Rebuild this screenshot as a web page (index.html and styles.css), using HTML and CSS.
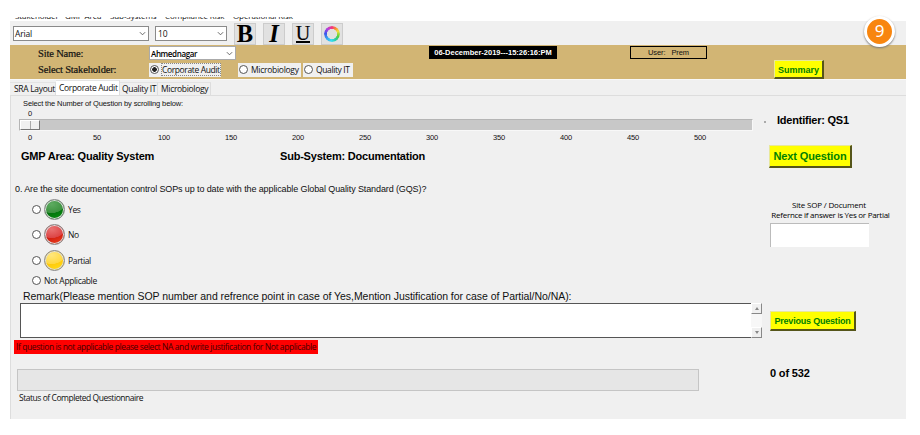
FILE: index.html
```html
<!DOCTYPE html>
<html lang="en">
<head>
<meta charset="utf-8">
<title>Site Risk Assessment</title>
<link rel="stylesheet" href="styles.css">
</head>
<body>
<div class="window">
  <nav class="menu"><span class="m1">Stakeholder</span><span class="m2">GMP Area</span><span class="m3">Sub-Systems</span><span class="m4">Compliance Risk</span><span class="m5">Operational Risk</span></nav>
  <div class="toolbar">
    <div class="combo font-combo"><span>Arial</span><svg class="chev" viewBox="0 0 8 5"><path d="M1 1l3 3 3-3"/></svg></div>
    <div class="combo size-combo"><span>10</span><svg class="chev" viewBox="0 0 8 5"><path d="M1 1l3 3 3-3"/></svg></div>
    <div class="tool bold">B</div>
    <div class="tool italic">I</div>
    <div class="tool underline"><span>U</span></div>
    <div class="tool"><i class="wheel"></i></div>
    <div class="badge">9</div>
  </div>
  <header class="header">
    <div class="hrow">
      <span class="hlabel site">Site Name:</span>
      <div class="combo site-combo"><span class="ahm">Ahmednagar</span><svg class="chev" viewBox="0 0 8 5"><path d="M1 1l3 3 3-3"/></svg></div>
      <div class="clock"><span>06-December-2019---15:26:16:PM</span></div>
      <div class="user"><span>User:&nbsp;&nbsp; Prem</span></div>
    </div>
    <div class="hrow second">
      <span class="hlabel stake">Select Stakeholder:</span>
      <label class="choice c1"><i class="radio on"></i><span class="focus">Corporate Audit</span></label>
      <label class="choice c2"><i class="radio"></i><span>Microbiology</span></label>
      <label class="choice c3"><i class="radio"></i><span>Quality IT</span></label>
      <button class="btn summary"><span>Summary</span></button>
    </div>
  </header>
  <div class="tabs">
    <span class="tab t1">SRA Layout</span><span class="tab t2 active">Corporate Audit</span><span class="tab t3">Quality IT</span><span class="tab t4">Microbiology</span>
  </div>
  <main class="panel">
    <section class="left">
      <div class="caption">Select the Number of Question by scrolling below:</div>
      <div class="value">0</div>
      <div class="slider"><i class="thumb"></i></div>
      <div class="ticks"><span>0</span><span>50</span><span>100</span><span>150</span><span>200</span><span>250</span><span>300</span><span>350</span><span>400</span><span>450</span><span>500</span></div>
      <div class="areas"><span class="gmp">GMP Area: Quality System</span><span class="sub">Sub-System: Documentation</span></div>
      <p class="question">0. Are the site documentation control SOPs up to date with the applicable Global Quality Standard (GQS)?</p>
      <label class="answer"><i class="radio"></i><i class="lamp green"></i><span>Yes</span></label>
      <label class="answer"><i class="radio"></i><i class="lamp red"></i><span>No</span></label>
      <label class="answer"><i class="radio"></i><i class="lamp yellow"></i><span>Partial</span></label>
      <label class="answer na"><i class="radio"></i><span>Not Applicable</span></label>
      <div class="remark">Remark(Please mention SOP number and refrence point in case of Yes,Mention Justification for case of Partial/No/NA):</div>
      <div class="memo"><div class="memo-text"></div><div class="scroll"><i class="arrow up"></i><i class="arrow down"></i></div></div>
      <div class="warning"><span>If question is not applicable please select NA and write justification for Not applicable</span></div>
      <div class="progress"></div>
      <div class="status">Status of Completed Questionnaire</div>
    </section>
    <aside class="right">
      <div class="ident"><i class="dot"></i><span>Identifier: QS1</span></div>
      <button class="btn next"><span>Next Question</span></button>
      <div class="sop"><span class="s1">Site SOP / Document</span><span class="s2">Refernce if answer is Yes or Partial</span></div>
      <div class="input"></div>
      <button class="btn prev"><span>Previous Question</span></button>
      <div class="count">0 of 532</div>
    </aside>
  </main>
</div>
</body>
</html>
```
FILE: styles.css
```css
* { box-sizing: border-box; }
body { margin: 0; width: 920px; height: 435px; overflow: hidden; background: #fff; font-family: "Open Sans", sans-serif; font-size: 8.5px; letter-spacing: -.38px; color: #111; white-space: nowrap; }
i { font-style: normal; display: block; flex: none; }
.window { margin: 17px 0 0 10px; width: 896px; }
.menu { height: 4px; display: flex; align-items: flex-end; overflow: hidden; padding-left: 5px; }
.menu span { flex: none; line-height: 12px; margin-bottom: -1px; font-size: 8px; letter-spacing: -.1px; }
.m1 { width: 50px; } .m2 { width: 45px; } .m3 { width: 55px; } .m4 { width: 68px; }
.toolbar { height: 24px; background: #f0f0f0; display: flex; padding: 2px 0 0 3px; position: relative; }
.combo { border: 1px solid #8a8a8a; background: #fff; display: flex; align-items: center; justify-content: space-between; padding: 0 2px 0 1px; }
.chev { width: 7px; height: 5px; fill: none; stroke: #555; stroke-width: 1; }
.font-combo { width: 136px; height: 15px; margin-top: 3px; letter-spacing: -.2px; }
.size-combo { width: 72px; height: 15px; margin: 3px 7px 0 6px; padding-left: 2px; letter-spacing: 0; }
.tool { width: 22px; height: 22px; margin-right: 7px; background: #e1e1e1; border: 1px solid #ccc; font: bold 24.5px/20px "Liberation Serif", serif; letter-spacing: 0; color: #000; text-align: center; display: flex; justify-content: center; align-items: center; }
.italic { font-style: italic; }
.underline { font-size: 20px; font-weight: normal; }
.underline span { line-height: 14px; height: 17px; border-bottom: 2px solid #000; -webkit-text-stroke: .2px #000; }
.wheel { width: 16px; height: 16px; border-radius: 50%; background: conic-gradient(#f4347c, #f99030 35deg, #f5df3b 65deg, #55d13c 110deg, #28c9a0 145deg, #35dff5 185deg, #36a9f0 225deg, #3d53ec 275deg, #b540dd 320deg, #f4347c); -webkit-mask: radial-gradient(circle, transparent 4.8px, #000 5.3px); mask: radial-gradient(circle, transparent 4.8px, #000 5.3px); }
.badge { position: absolute; left: 854px; top: -5px; width: 31px; height: 31px; border-radius: 50%; background: #f8860f; border: 3px solid #fff; box-shadow: 0 1px 2px #777; color: #fff; font: 17px/23px "Noto Sans", sans-serif; letter-spacing: 0; text-align: center; }
.header { height: 34px; background: #d2b574; }
.hrow { height: 16px; display: flex; padding-top: 1px; }
.hrow.second { height: 18px; }
.hlabel { font: 10.5px/15px "Liberation Serif", serif; letter-spacing: -.16px; color: #111; width: 111px; margin-left: 28px; -webkit-text-stroke: .2px #111; }
.stake { line-height: 16px; }
.site-combo { width: 87px; height: 14px; border-color: #aaa; color: #000; }
.ahm { font-weight: 600; font-size: 8px; }
.clock { width: 128px; height: 13px; margin-left: 193px; background: #000; color: #fff; font: bold 7.5px/13px "Liberation Sans", sans-serif; letter-spacing: 0; text-align: center; }
.user { width: 77px; height: 13px; margin-left: 73px; border: 1px solid #000; font: 7.5px/11px "Liberation Sans", sans-serif; letter-spacing: -.1px; text-align: center; }
.choice { height: 14px; background: #f0f0f0; display: flex; align-items: center; gap: 3px; padding-left: 1px; margin-top: .5px; }
.radio { width: 9px; height: 9px; border: 1px solid #555; border-radius: 50%; background: #fff; }
.radio.on { background: radial-gradient(circle, #222 2px, #fff 2.6px); }
.c1 { width: 72px; } .c2 { width: 63px; margin-left: 17px; letter-spacing: -.28px; } .c3 { width: 50px; margin-left: 2px; }
.focus { outline: 1px dotted #888; line-height: 11px; }
.btn { background: #ff0; color: #008000; border: solid; border-width: 1px 2px 2px 1px; border-color: #e8e89a #55551a #55551a #e8e89a; border-radius: 0; padding: 0; display: block; font-family: "Liberation Sans", sans-serif; font-weight: bold; text-align: center; white-space: nowrap; }
.summary { width: 50px; height: 19px; margin: -2px 0 0 421px; padding-top: 1px; font-size: 9px; letter-spacing: 0; }
.tabs { height: 16px; background: #f0f0f0; display: flex; align-items: flex-end; border-top: 1px solid #f8f8f8; }
.tab { height: 13px; line-height: 12px; border-right: 1px solid #ddd; border-top: 1px solid #e3e3e3; letter-spacing: -.32px; }
.t1 { width: 46px; padding-left: 4px; } .t2 { width: 64px; padding-left: 3px; } .t3 { width: 38px; padding-left: 2px; } .t4 { width: 53px; padding-left: 3px; }
.tab.active { height: 15px; line-height: 13px; background: #fff; }
.panel { height: 324px; background: #f0f0f0; border-top: 1px solid #ddd; border-left: 1px solid #ddd; display: flex; font-family: "Liberation Sans", sans-serif; letter-spacing: 0; }
.left { width: 752px; }
.caption { font-size: 7.5px; line-height: 10px; margin: 3px 0 0 12px; letter-spacing: -.12px; }
.value { font-size: 7.5px; line-height: 10px; margin-left: 17px; }
.slider { width: 734px; height: 12px; margin-left: 8px; background: #c8c8c8; border: 1px solid #bbb; border-color: #b5b5b5 #f8f8f8 #f8f8f8 #b5b5b5; }
.thumb { width: 20px; height: 10px; border: 1px solid #fff; border-right-color: #777; border-bottom-color: #777; background: linear-gradient(90deg, #f0f0f0 9px, #aaa 9px 10px, #f0f0f0 10px); }
.ticks { width: 690px; margin: 2px 0 0 9px; display: flex; justify-content: space-between; font-size: 7.5px; line-height: 10px; letter-spacing: -.1px; }
.ticks span { width: 20px; text-align: center; }
.areas { display: flex; font-weight: bold; font-size: 11px; line-height: 14px; letter-spacing: -.21px; margin: 6px 0 0 10px; color: #000; }
.gmp { width: 259px; }
.question { margin: 20px 0 0 4px; font-size: 9px; line-height: 12px; height: 14px; letter-spacing: -.11px; }
.answer { display: flex; align-items: center; height: 25.3px; margin-left: 21px; font: 8.5px "Open Sans", sans-serif; letter-spacing: -.35px; }
.lamp { width: 21px; height: 21px; margin: 0 3px; border: 1px solid #888; border-radius: 50%; box-shadow: inset 0 0 0 1px #ddd; }
.green { background: radial-gradient(ellipse 13px 9px at 35% 22%, #5dab60, #3c923f 95%, transparent 100%), linear-gradient(160deg, #00680a 40%, #0b9312); }
.red { background: radial-gradient(ellipse 13px 9px at 35% 22%, #ea7272, #dc4444 95%, transparent 100%), linear-gradient(160deg, #c60d08 40%, #f04722); }
.yellow { background: radial-gradient(ellipse 13px 9px at 35% 22%, #ffe77c, #ffd840 95%, transparent 100%), linear-gradient(160deg, #ffc000 40%, #ffe020); }
.na { height: 15px; gap: 3px; }
.remark { font-size: 10.5px; line-height: 14px; margin: 1px 0 0 12px; letter-spacing: -.05px; }
.memo { display: flex; margin-left: 9px; width: 742px; height: 35px; }
.memo-text { width: 731px; border: 1px solid #555; border-right: 0; background: #fff; }
.scroll { width: 11px; background: #f7f7f7; display: flex; flex-direction: column; justify-content: space-between; }
.arrow { width: 11px; height: 11px; background: #f0f0f0; border: 1px solid #fff; border-right-color: #888; border-bottom-color: #888; display: flex; align-items: center; justify-content: center; }
.arrow::before { content: ""; border: 2.5px solid transparent; }
.up::before { border-top: 0; border-bottom: 3px solid #888; }
.down::before { border-bottom: 0; border-top: 3px solid #888; }
.warning { width: 304px; height: 14px; margin: 2px 0 0 3px; padding-left: 2px; background: #f00; font: 8.5px/14px "Open Sans", sans-serif; letter-spacing: -.405px; color: #400; }
.progress { width: 682px; height: 22px; margin: 15px 0 0 6px; background: #e6e6e6; border: 1px solid #c5c5c5; }
.status { margin: 1px 0 0 8px; font: 8.5px/12px "Open Sans", sans-serif; letter-spacing: -.46px; }
.right { width: 142px; color: #000; }
.ident { display: flex; align-items: center; gap: 11px; padding-left: 1px; margin-top: 17px; font-weight: bold; font-size: 11px; line-height: 14px; letter-spacing: -.22px; }
.dot { width: 2px; height: 2px; background: #aaa; margin-top: 4px; }
.next { width: 83px; height: 23px; margin: 18px 0 0 6px; font-size: 11px; letter-spacing: -.12px; }
.sop { width: 121px; margin: 32px 0 0 7px; font: 8px/10px "Open Sans", sans-serif; letter-spacing: -.27px; display: flex; flex-direction: column; align-items: center; }
.s1 { letter-spacing: -.18px; margin-right: 3px; }
.input { width: 99px; height: 24px; margin: 3px 0 0 7px; background: #fff; border: solid #bbb; border-width: 1px 0 0 1px; }
.prev { width: 86px; height: 20px; margin: 64px 0 0 7px; font-size: 9px; letter-spacing: -.2px; }
.count { margin: 35px 0 0 7px; font-weight: bold; font-size: 11px; line-height: 14px; letter-spacing: -.15px; }
```
